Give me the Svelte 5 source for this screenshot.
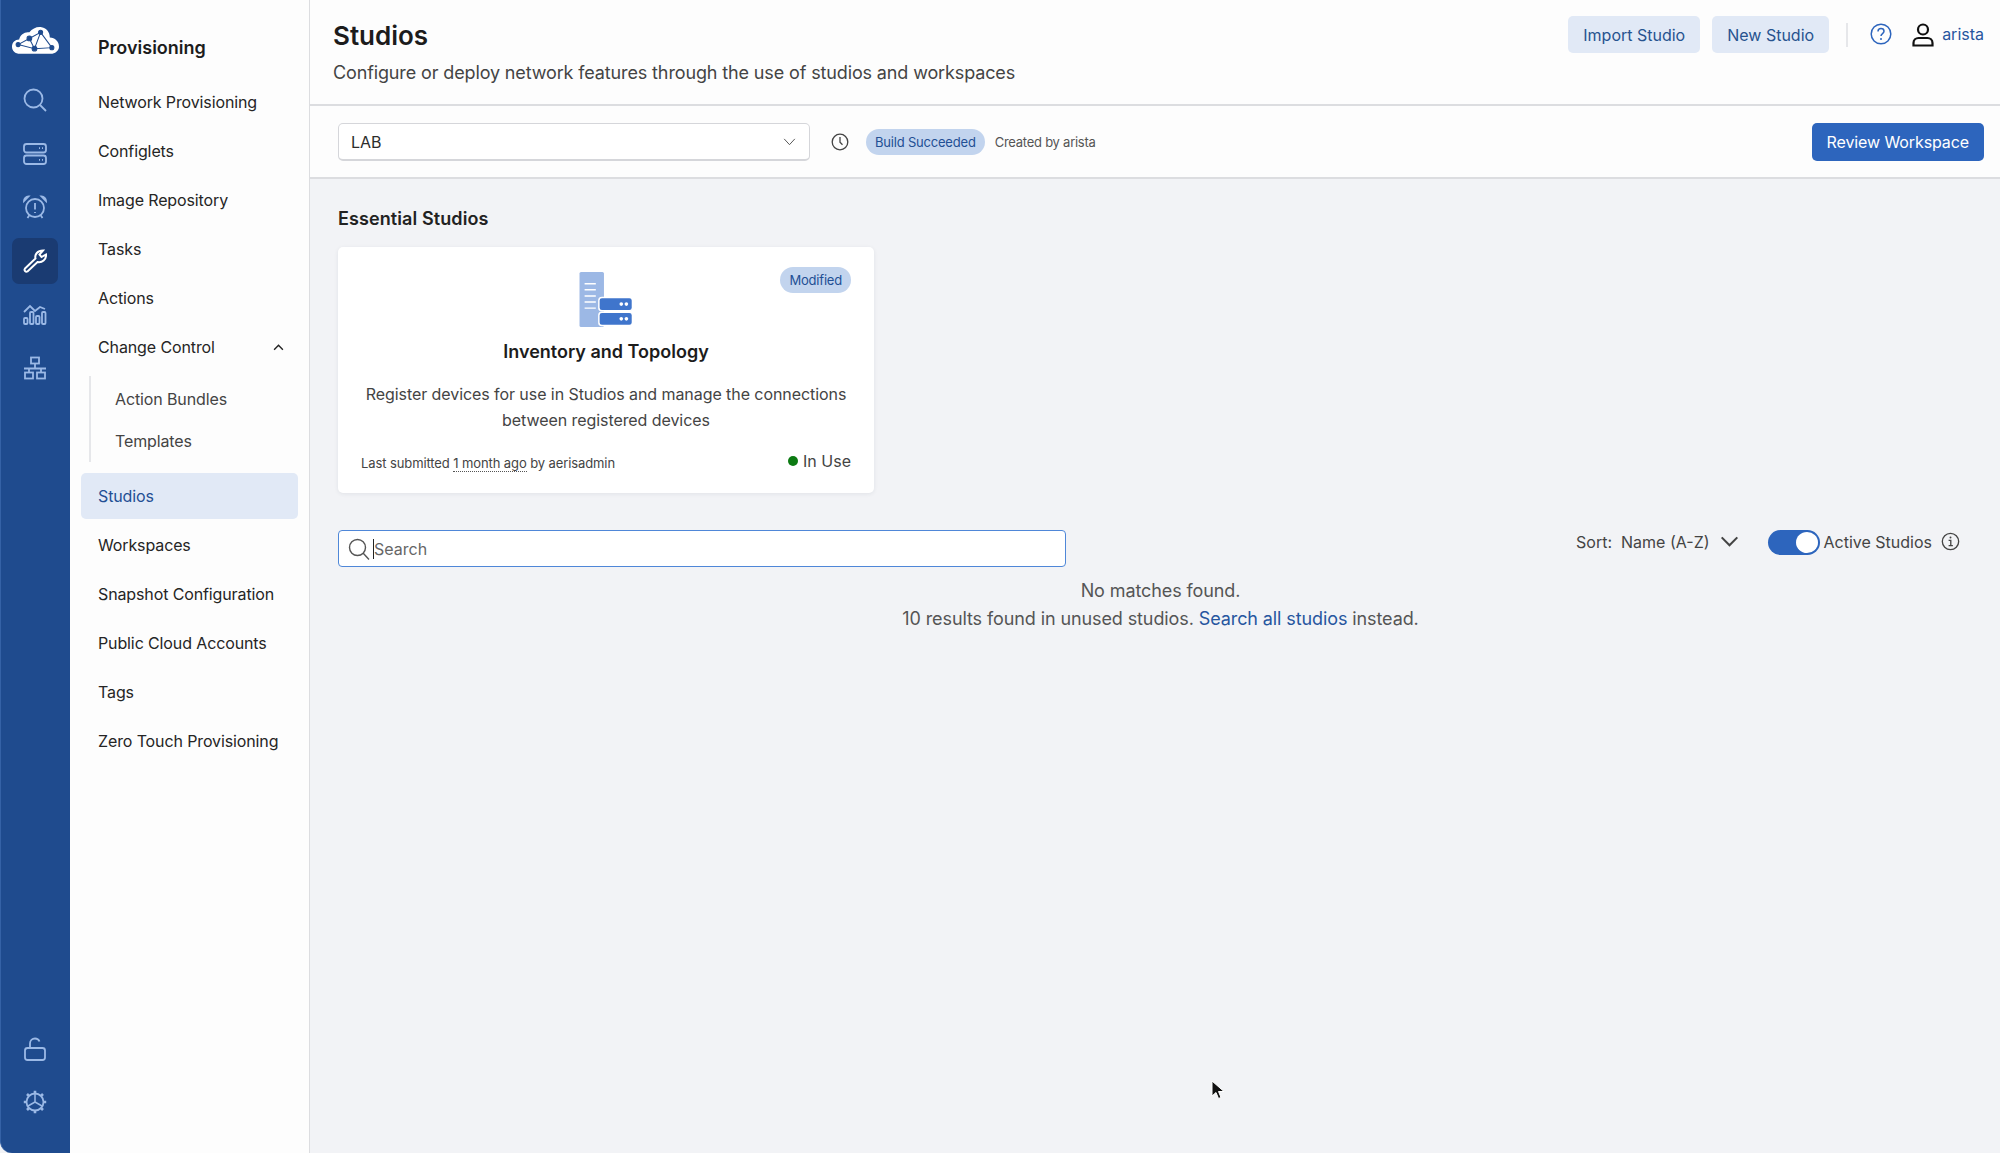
<script>
  const navTop = ["Network Provisioning", "Configlets", "Image Repository", "Tasks", "Actions"];
  const navBottom = ["Workspaces", "Snapshot Configuration", "Public Cloud Accounts", "Tags", "Zero Touch Provisioning"];
</script>

<div class="app">
  <nav class="rail">
    <svg class="logo" viewBox="0 0 46 28" width="47" height="29">
      <path d="M8 27C3 27 0 24 0 20c0-4 3-7 7-7 1-5 6-8 10-7 3-4 8-6 12-5 5 1 8 5 8 10 5 0 9 4 9 9 0 4-4 7-8 7z" fill="#fff"/>
      <g stroke="#1f4b8e" stroke-width="1" fill="#1f4b8e">
        <path d="M6 18 17 12 28 6 22 22 6 18M17 12 22 22M28 6 39 21 22 22" fill="none"/>
        <circle cx="6" cy="18" r="2"/><circle cx="17" cy="12" r="2.3"/><circle cx="28" cy="6" r="2"/><circle cx="22" cy="22" r="2.3"/><circle cx="39" cy="21" r="2"/>
      </g>
    </svg>
    <div class="rail-item">
      <svg viewBox="0 0 24 24" width="24" height="24"><circle cx="10.5" cy="10.5" r="9"/><path d="M17 17l6 6"/></svg>
    </div>
    <div class="rail-item">
      <svg viewBox="0 0 24 24" width="24" height="24"><rect x="1" y="2" width="22" height="8.5" rx="2.5"/><rect x="1" y="13.5" width="22" height="8.5" rx="2.5"/><path d="M16 6.2h1M19 6.2h1M16 17.8h1M19 17.8h1"/></svg>
    </div>
    <div class="rail-item">
      <svg viewBox="0 0 24 24" width="24" height="24"><circle cx="12" cy="13" r="9"/><path d="M12 8v6.500M12 17v1M1 6c0-2.500 2-4.500 4.500-4.500zM23 6c0-2.500-2-4.500-4.500-4.500zM4.500 23l2-3M19.500 23l-2-3"/></svg>
    </div>
    <div class="rail-item active">
      <svg viewBox="0 0 24 24" width="24" height="24"><path d="M2 19.500 12.500 9.500C11.500 5.500 14.500 1.500 20 1.500l-3.500 4 2 2.500 4.500-2.500c.5 5-4 8.500-8.500 7.500L4.500 22.500c-1.800 1-3.800-1.200-2.500-3z"/></svg>
    </div>
    <div class="rail-item">
      <svg viewBox="0 0 24 24" width="24" height="24"><path d="M1 10l6-6 5 5 5-4 5 2"/><rect x="1" y="16" width="3.5" height="6" rx="1"/><rect x="7" y="10" width="3.5" height="12" rx="1"/><rect x="13" y="14" width="3.5" height="8" rx="1"/><rect x="19" y="10" width="3.5" height="12" rx="1"/></svg>
    </div>
    <div class="rail-item">
      <svg viewBox="0 0 24 24" width="24" height="24"><rect x="8" y="1.500" width="8" height="6"/><rect x="2" y="16.500" width="8" height="6"/><rect x="14" y="16.500" width="8" height="6"/><path d="M12 7.500v5M1 12.500h22M6 12.500v4M18 12.500v4"/></svg>
    </div>
    <div class="rail-spacer"></div>
    <div class="rail-item">
      <svg viewBox="0 0 24 24" width="24" height="24"><rect x="2" y="11" width="20" height="12" rx="2.500"/><path d="M7 11V6.500C7 3.500 9.200 1.500 12 1.500c2 0 3.700 1 4.500 3"/></svg>
    </div>
    <div class="rail-item gear">
      <svg viewBox="0 0 24 24" width="24" height="24"><circle cx="12" cy="12" r="8.500"/><path d="M12 12V4M12 12l7 4M12 12l-7 4" stroke-width="1.500"/><path class="teeth" d="M12 .8v3M12 20.200v3M.8 12h3M20.200 12h3M4 4l2.200 2.200M17.800 17.800 20 20M4 20l2.200-2.200M17.800 6.200 20 4"/></svg>
    </div>
  </nav>

  <aside class="sidebar">
    <h2>Provisioning</h2>
    {#each navTop as item}
      <div class="nav-item">{item}</div>
    {/each}
    <div class="nav-item nav-group">
      Change Control
      <svg viewBox="0 0 12 8" width="11" height="7"><path d="M1 6.500 6 1.500l5 5" fill="none" stroke="#222" stroke-width="1.600"/></svg>
    </div>
    <div class="subnav">
      <div class="sub-item">Action Bundles</div>
      <div class="sub-item">Templates</div>
    </div>
    <div class="nav-item selected">Studios</div>
    {#each navBottom as item}
      <div class="nav-item">{item}</div>
    {/each}
  </aside>

  <main class="main">
    <header class="header">
      <div class="titles">
        <h1>Studios</h1>
        <p class="subtitle">Configure or deploy network features through the use of studios and workspaces</p>
      </div>
      <div class="header-actions">
        <button class="btn-light">Import Studio</button>
        <button class="btn-light">New Studio</button>
        <span class="divider"></span>
        <svg class="help" viewBox="0 0 22 22" width="22" height="22">
          <circle cx="11" cy="11" r="9.800" fill="none" stroke="#2d65bd" stroke-width="1.500"/>
          <path d="M8 8.500c0-1.800 1.300-2.900 3-2.900s3 1.100 3 2.700c0 2.400-3 2.300-3 4.700" fill="none" stroke="#2d65bd" stroke-width="1.500"/>
          <circle cx="11" cy="16" r="1" fill="#2d65bd"/>
        </svg>
        <svg class="user" viewBox="0 0 22 24" width="22" height="24">
          <circle cx="11" cy="6.500" r="5" fill="none" stroke="#111" stroke-width="2.200"/>
          <path d="M1.500 22.500v-2.500c0-3 2.500-5 5-5h9c2.500 0 5 2 5 5v2.500z" fill="none" stroke="#111" stroke-width="2.200"/>
        </svg>
        <span class="username">arista</span>
      </div>
    </header>

    <div class="toolbar">
      <div class="select">
        LAB
        <svg viewBox="0 0 14 9" width="13" height="8"><path d="M1 1l6 6.500L13 1" fill="none" stroke="#555" stroke-width="1.100"/></svg>
      </div>
      <svg class="clock" viewBox="0 0 18 18" width="18" height="18">
        <circle cx="9" cy="9" r="7.800" fill="none" stroke="#444" stroke-width="1.300"/>
        <path d="M9 4v5.300l2.500 2.500" fill="none" stroke="#444" stroke-width="1.300"/>
      </svg>
      <span class="pill">Build Succeeded</span>
      <span class="created">Created by arista</span>
      <button class="btn-primary">Review Workspace</button>
    </div>

    <section class="content">
      <h3>Essential Studios</h3>
      <article class="card">
        <span class="pill modified">Modified</span>
        <svg class="card-icon" viewBox="0 0 52 54" width="54" height="55">
          <rect x="0" y="0" width="24" height="54" rx="1.500" fill="#9cb8e5"/>
          <path d="M5 11.500h11M5 17.500h11M5 23.500h11M5 29.500h11M5 35.500h11" stroke="#fff" stroke-width="1.400"/>
          <rect x="19" y="25" width="33" height="13" rx="3" fill="#3f75cc" stroke="#fff" stroke-width="1.500"/>
          <rect x="19" y="39.500" width="33" height="13" rx="3" fill="#3f75cc" stroke="#fff" stroke-width="1.500"/>
          <circle cx="41" cy="31.500" r="1.800" fill="#fff"/><circle cx="46" cy="31.500" r="1.800" fill="#fff"/>
          <circle cx="41" cy="46" r="1.800" fill="#fff"/><circle cx="46" cy="46" r="1.800" fill="#fff"/>
        </svg>
        <h4>Inventory and Topology</h4>
        <p class="card-text">Register devices for use in Studios and manage the connections between registered devices</p>
        <div class="card-foot">
          <span class="submitted">Last submitted <span class="dotted">1 month ago</span> by aerisadmin</span>
          <span class="in-use"><i class="dot"></i>In Use</span>
        </div>
      </article>

      <div class="filters">
        <div class="search">
          <svg viewBox="0 0 22 22" width="22" height="22"><circle cx="9.500" cy="9.500" r="8" fill="none" stroke="#555" stroke-width="1.400"/><path d="M15 15l6 6.500" stroke="#555" stroke-width="1.400"/></svg>
          <span class="caret"></span>
          <span class="placeholder">Search</span>
        </div>
        <div class="filter-right">
          <span class="sort">Sort:</span>
          <span class="sort-value">Name (A-Z)</span>
          <svg viewBox="0 0 20 12" width="19" height="11"><path d="M1.500 1.500 10 10l8.500-8.500" fill="none" stroke="#444" stroke-width="2.300"/></svg>
          <span class="toggle"><span class="knob"></span></span>
          <span class="toggle-label">Active Studios</span>
          <svg viewBox="0 0 20 20" width="19" height="19"><circle cx="10" cy="10" r="8.600" fill="none" stroke="#444" stroke-width="1.400"/><path d="M8 8.800h2.300V14M8 14.300h4.500" fill="none" stroke="#444" stroke-width="1.400"/><circle cx="10" cy="5.800" r="1" fill="#444"/></svg>
        </div>
      </div>

      <div class="empty">
        <div>No matches found.</div>
        <div>10 results found in unused studios. <span class="link">Search all studios</span> instead.</div>
      </div>
    </section>
  </main>

  <svg class="cursor" viewBox="0 0 14 20" width="14" height="20"><path d="M1 1v15l4-3.500 2.500 6 2.500-1-2.500-6H13z" fill="#111" stroke="#fff" stroke-width="1"/></svg>
</div>

<style>
  :global(body) {
    margin: 0;
    font-family: Inter, "Liberation Sans", sans-serif;
    color: #222;
    background: #f2f3f6;
  }

  .app {
    display: flex;
    width: 2000px;
    height: 1153px;
    overflow: hidden;
    position: relative;
  }

  .rail {
    width: 70px;
    flex: none;
    background: #1f4b8e;
    border-left: 1px solid #3562a6;
    box-sizing: border-box;
    display: flex;
    flex-direction: column;
    align-items: center;
    padding: 26px 1px 20px 0;
    border-bottom-left-radius: 12px;
  }

  .logo {
    margin-bottom: 22px;
  }

  .rail-item {
    width: 46px;
    height: 46px;
    margin-bottom: 7.6px;
    display: flex;
    align-items: center;
    justify-content: center;
    border-radius: 7px;
    flex: none;
  }

  .rail-item svg {
    fill: none;
    stroke: #9bb9e6;
    stroke-width: 1.800;
  }

  .rail-item.active {
    background: #1a3b72;
  }

  .rail-item.active svg {
    stroke: #fff;
    stroke-width: 2;
  }

  .rail-item .teeth {
    stroke-width: 2.600;
  }

  .rail-spacer {
    flex: 1;
  }

  .sidebar {
    width: 240px;
    flex: none;
    background: #fdfdfd;
    border-right: 1px solid #dcdde0;
    box-sizing: border-box;
    padding: 0 11px;
  }

  .sidebar h2 {
    font-size: 18px;
    line-height: 22px;
    font-weight: 600;
    margin: 37px 0 20px 17px;
    color: #1c1c1c;
  }

  .nav-item {
    height: 46px;
    margin-bottom: 3px;
    padding: 0 14px 0 17px;
    display: flex;
    align-items: center;
    justify-content: space-between;
    font-size: 16px;
    letter-spacing: -0.12px;
    border-radius: 5px;
    color: #252525;
  }

  .nav-group {
    margin-bottom: 6px;
  }

  .subnav {
    margin: 0 0 11px 8px;
    padding: 2px 0 0 0;
    border-left: 2px solid #e6e7ea;
  }

  .sub-item {
    height: 42px;
    display: flex;
    align-items: center;
    padding-left: 24px;
    font-size: 16px;
    letter-spacing: -0.12px;
    color: #444;
  }

  .selected {
    background: #e1e9f6;
    color: #234f94;
  }

  .main {
    flex: 1;
    display: flex;
    flex-direction: column;
  }

  .header {
    height: 106px;
    box-sizing: border-box;
    background: #fdfdfd;
    border-bottom: 2px solid #dcdde0;
    display: flex;
    justify-content: space-between;
    padding: 16px 16px 0 23px;
  }

  .titles {
    padding-top: 4px;
  }

  h1 {
    font-size: 26px;
    line-height: 32px;
    font-weight: 600;
    margin: 0 0 9px;
    color: #1c1c1c;
  }

  .subtitle {
    margin: 0;
    font-size: 18px;
    line-height: 24px;
    letter-spacing: -0.13px;
    color: #444;
  }

  .header-actions {
    display: flex;
    align-items: flex-start;
  }

  button {
    font: inherit;
    border: 0;
    border-radius: 5px;
  }

  .btn-light {
    height: 37px;
    padding: 0 15px;
    margin-right: 12px;
    background: #e1e9f6;
    color: #27538f;
    font-size: 16px;
  }

  .divider {
    width: 2px;
    height: 24px;
    margin: 7px 22px 0 5px;
    background: #e6e7ea;
  }

  .help {
    margin: 7px 20px 0 0;
  }

  .user {
    margin: 7px 8px 0 0;
  }

  .username {
    font-size: 16px;
    line-height: 37px;
    color: #27569f;
  }

  .toolbar {
    height: 73px;
    box-sizing: border-box;
    background: #fdfdfd;
    border-bottom: 2px solid #dcdde0;
    display: flex;
    align-items: center;
    padding: 1px 16px 0 28px;
  }

  .select {
    width: 472px;
    height: 38px;
    box-sizing: border-box;
    border: 1px solid #d5d6da;
    border-bottom-width: 2px;
    border-radius: 5px;
    background: #fff;
    display: flex;
    align-items: center;
    justify-content: space-between;
    padding: 0 13px 0 12px;
    font-size: 16px;
    color: #2c2c2c;
  }

  .clock {
    margin: 0 17px 0 21px;
  }

  .pill {
    background: #c2d4ee;
    color: #224f94;
    border-radius: 13px;
    font-size: 13px;
    letter-spacing: -0.2px;
    line-height: 26px;
    padding: 0 9px;
  }

  .created {
    margin-left: 10px;
    font-size: 13px;
    letter-spacing: -0.25px;
    color: #555;
  }

  .btn-primary {
    margin-left: auto;
    height: 38px;
    padding: 0 15px;
    background: #2d65bd;
    color: #fff;
    font-size: 16px;
    letter-spacing: -0.1px;
  }

  .content {
    padding: 28px 0 0 28px;
  }

  h3 {
    font-size: 18px;
    line-height: 24px;
    letter-spacing: 0.1px;
    font-weight: 600;
    margin: 0 0 16px;
    color: #222;
  }

  .card {
    position: relative;
    width: 536px;
    height: 246px;
    box-sizing: border-box;
    background: #fff;
    border-radius: 5px;
    box-shadow: 0 1px 4px rgba(30, 40, 70, 0.08);
    padding: 25px 23px 0;
    text-align: center;
  }

  .card-icon {
    display: block;
    margin: 0 auto;
  }

  .modified {
    position: absolute;
    right: 23px;
    top: 20px;
    line-height: 26px;
  }

  .card h4 {
    font-size: 18px;
    line-height: 24px;
    font-weight: 600;
    margin: 13px 0 17px;
    color: #1c1c1c;
  }

  .card-text {
    margin: 0 0 20px;
    font-size: 16px;
    line-height: 26px;
    letter-spacing: -0.07px;
    color: #444;
  }

  .card-foot {
    display: flex;
    justify-content: space-between;
    align-items: center;
  }

  .submitted {
    font-size: 13px;
    letter-spacing: -0.1px;
    color: #444;
  }

  .dotted {
    border-bottom: 1px dotted #555;
  }

  .in-use {
    font-size: 16px;
    color: #444;
    display: flex;
    align-items: center;
    transform: translateY(-2px);
  }

  .dot {
    width: 10px;
    height: 10px;
    border-radius: 50%;
    background: #0c7a12;
    margin-right: 5px;
  }

  .filters {
    display: flex;
    justify-content: space-between;
    align-items: flex-start;
    margin-top: 37px;
    padding-right: 40px;
  }

  .search {
    width: 728px;
    height: 37px;
    box-sizing: border-box;
    background: #fff;
    border: 1px solid #4f87d8;
    border-radius: 4px;
    display: flex;
    align-items: center;
    padding-left: 9px;
    font-size: 16px;
    color: #555;
  }

  .caret {
    width: 1px;
    height: 20px;
    background: #222;
    margin-left: 3px;
  }

  .placeholder {
    color: #666;
  }

  .filter-right {
    display: flex;
    align-items: center;
    height: 25px;
    margin-top: -1px;
    font-size: 16px;
    color: #444;
  }

  .sort-value {
    margin: 0 10px 0 9px;
  }

  .toggle {
    width: 52px;
    height: 25px;
    box-sizing: border-box;
    background: #2d65bd;
    border-radius: 13px;
    margin: 1px 4px 0 29px;
    padding: 2px 2px 2px 28px;
  }

  .knob {
    display: block;
    width: 22px;
    height: 21px;
    border-radius: 50%;
    background: #fff;
  }

  .toggle-label {
    margin-right: 9px;
  }

  .empty {
    width: 1645px;
    text-align: center;
    margin-top: 10px;
    font-size: 18px;
    line-height: 28px;
    letter-spacing: -0.1px;
    color: #555;
  }

  .link {
    color: #27569f;
  }

  .cursor {
    position: absolute;
    left: 1211px;
    top: 1080px;
  }
</style>
